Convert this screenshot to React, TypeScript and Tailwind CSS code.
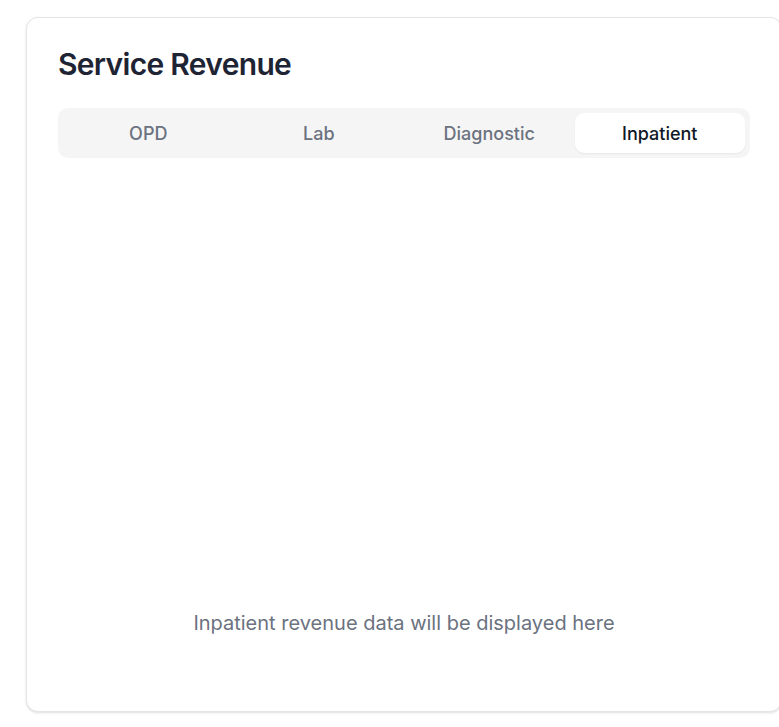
import React, { useState } from 'react';

const tabs = ['OPD', 'Lab', 'Diagnostic', 'Inpatient'];

const App: React.FC = () => {
  const [active, setActive] = useState('Inpatient');

  return (
    <div className="min-h-screen bg-white pl-[26px] pt-[17px]" style={{ fontFamily: 'Inter, "Noto Sans", sans-serif' }}>
      <div className="w-[756px] h-[695px] rounded-xl border border-[#e4e6ea] bg-white shadow-sm px-[31px] pt-[28px] pb-8 flex flex-col">
        {/* Header */}
        <h2 className="text-[30px] leading-9 font-semibold text-[#1e2433] tracking-[-0.023em]">Service Revenue</h2>

        {/* Tabs */}
        <div className="mt-[26px] grid grid-cols-4 gap-0 rounded-[10px] bg-[#f5f5f5] p-[5px] h-[50px]">
          {tabs.map((t) => (
            <button
              key={t}
              onClick={() => setActive(t)}
              className={
                t === active
                  ? 'rounded-[9px] bg-white text-[18px] font-medium text-[#111827] shadow-[0_1px_2px_rgba(0,0,0,0.06)]'
                  : 'rounded-[9px] text-[18px] font-medium text-[#6b7280]'
              }
            >
              {t}
            </button>
          ))}
        </div>

        {/* Content */}
        <div className="flex-1 flex items-end justify-center pb-[42px]">
          <p className="text-xl leading-7 text-[#6b7280]">{active} revenue data will be displayed here</p>
        </div>
      </div>
    </div>
  );
};

export default App;
